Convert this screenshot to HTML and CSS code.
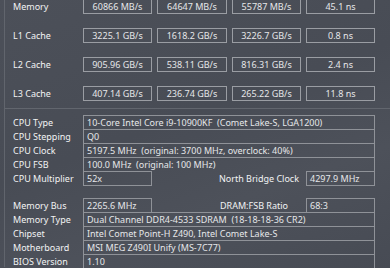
FILE: index.html
```html
<!DOCTYPE html>
<html lang="en">
<head>
    <meta charset="UTF-8">
    <meta name="viewport" content="width=device-width, initial-scale=1.0">
    <title>Cache &amp; Memory Benchmark</title>
    <link rel="stylesheet" href="styles.css">
</head>
<body>
    <div class="panel">
        <div class="bench">
            <div class="grid bench-row">
                <div class="label">Memory</div>
                <div class="cell">60866 MB/s</div>
                <div class="cell">64647 MB/s</div>
                <div class="cell">55787 MB/s</div>
                <div class="cell">45.1 ns</div>
            </div>
            <div class="grid bench-row">
                <div class="label">L1 Cache</div>
                <div class="cell">3225.1 GB/s</div>
                <div class="cell">1618.2 GB/s</div>
                <div class="cell">3226.7 GB/s</div>
                <div class="cell">0.8 ns</div>
            </div>
            <div class="grid bench-row">
                <div class="label">L2 Cache</div>
                <div class="cell">905.96 GB/s</div>
                <div class="cell">538.11 GB/s</div>
                <div class="cell">816.31 GB/s</div>
                <div class="cell">2.4 ns</div>
            </div>
            <div class="grid bench-row">
                <div class="label">L3 Cache</div>
                <div class="cell">407.14 GB/s</div>
                <div class="cell">236.74 GB/s</div>
                <div class="cell">265.22 GB/s</div>
                <div class="cell">11.8 ns</div>
            </div>
        </div>

        <div class="info cpu">
            <div class="grid info-row">
                <div class="label">CPU Type</div>
                <div class="val wide">10-Core Intel Core i9-10900KF&nbsp; (Comet Lake-S, LGA1200)</div>
            </div>
            <div class="grid info-row">
                <div class="label">CPU Stepping</div>
                <div class="val wide">Q0</div>
            </div>
            <div class="grid info-row">
                <div class="label">CPU Clock</div>
                <div class="val wide">5197.5 MHz&nbsp; (original: 3700 MHz, overclock: 40%)</div>
            </div>
            <div class="grid info-row">
                <div class="label">CPU FSB</div>
                <div class="val wide">100.0 MHz&nbsp; (original: 100 MHz)</div>
            </div>
            <div class="grid info-row">
                <div class="label">CPU Multiplier</div>
                <div class="val">52x</div>
                <div class="side-label nb">North Bridge Clock</div>
                <div class="val">4297.9 MHz</div>
            </div>
        </div>

        <div class="info mem">
            <div class="grid info-row">
                <div class="label">Memory Bus</div>
                <div class="val">2265.6 MHz</div>
                <div class="side-label ratio">DRAM:FSB Ratio</div>
                <div class="val">68:3</div>
            </div>
            <div class="grid info-row">
                <div class="label">Memory Type</div>
                <div class="val wide">Dual Channel DDR4-4533 SDRAM&nbsp; (18-18-18-36 CR2)</div>
            </div>
            <div class="grid info-row">
                <div class="label">Chipset</div>
                <div class="val wide">Intel Comet Point-H Z490, Intel Comet Lake-S</div>
            </div>
            <div class="grid info-row">
                <div class="label">Motherboard</div>
                <div class="val wide">MSI MEG Z490I Unify (MS-7C77)</div>
            </div>
            <div class="grid info-row">
                <div class="label">BIOS Version</div>
                <div class="val wide">1.10</div>
            </div>
        </div>
    </div>
</body>
</html>
```

FILE: styles.css
```css
/* AIDA64 style dark benchmark panel */
html, body {
    margin: 0;
    padding: 0;
    height: 100%;
    overflow: hidden;
}
body {
    font-family: "Noto Sans", "Open Sans", sans-serif;
    font-size: 9px;
    color: #e6e7e9;
    background-color: #4a4e57;
    background-image: linear-gradient(160deg, #4c5059 0%, #484c55 45%, #4d515a 70%, #474b54 100%);
}
.panel {
    margin-left: 4px;
    width: 381px;
    height: 100%;
    border-left: 1px solid #61656d;
    border-right: 1px solid #61656d;
    padding-left: 8px;
    box-sizing: content-box;
}
.grid {
    display: grid;
    grid-template-columns: 65px 69px 70px 69px 69px;
    column-gap: 5px;
    align-items: start;
}
.label {
    color: #f2f3f4;
    line-height: 13px;
    white-space: nowrap;
}
.bench {
    margin-top: -1px;
    margin-left: -8px;
    padding-left: 8px;
    padding-bottom: 7px;
    border-bottom: 1px solid #62666e;
    display: flex;
    flex-direction: column;
    gap: 14px;
}
.bench-row .label {
    padding-top: 1px;
}
.cell {
    height: 15px;
    box-sizing: border-box;
    border: 1px solid #9a9da3;
    text-align: center;
    line-height: 13px;
    white-space: nowrap;
}
.info {
    display: flex;
    flex-direction: column;
}
.cpu {
    margin-top: 6px;
}
.mem {
    margin-top: 12px;
}
.info-row {
    height: 14px;
}
.info-row .label {
    padding-top: 1px;
}
.info-row:last-child {
    height: 15px;
}
.val {
    height: 14px;
    box-sizing: border-box;
    border: 1px solid #8f9298;
    border-bottom: none;
    padding-left: 3px;
    line-height: 13px;
    white-space: nowrap;
    overflow: hidden;
}
.info-row:last-child .val {
    height: 15px;
    border-bottom: 1px solid #8f9298;
}
.val.wide {
    grid-column: 2 / 6;
}
.info-row .val:last-child:not(.wide) {
    grid-column: 5;
}
.mem .info-row:first-child .val {
    height: 15px;
    border-bottom: 1px solid #8f9298;
}
.side-label {
    grid-column: 3 / 5;
    text-align: right;
    line-height: 13px;
    padding-top: 1px;
    color: #f2f3f4;
    white-space: nowrap;
}
.side-label.nb {
    padding-right: 2px;
}
.side-label.ratio {
    padding-right: 13px;
}
```
